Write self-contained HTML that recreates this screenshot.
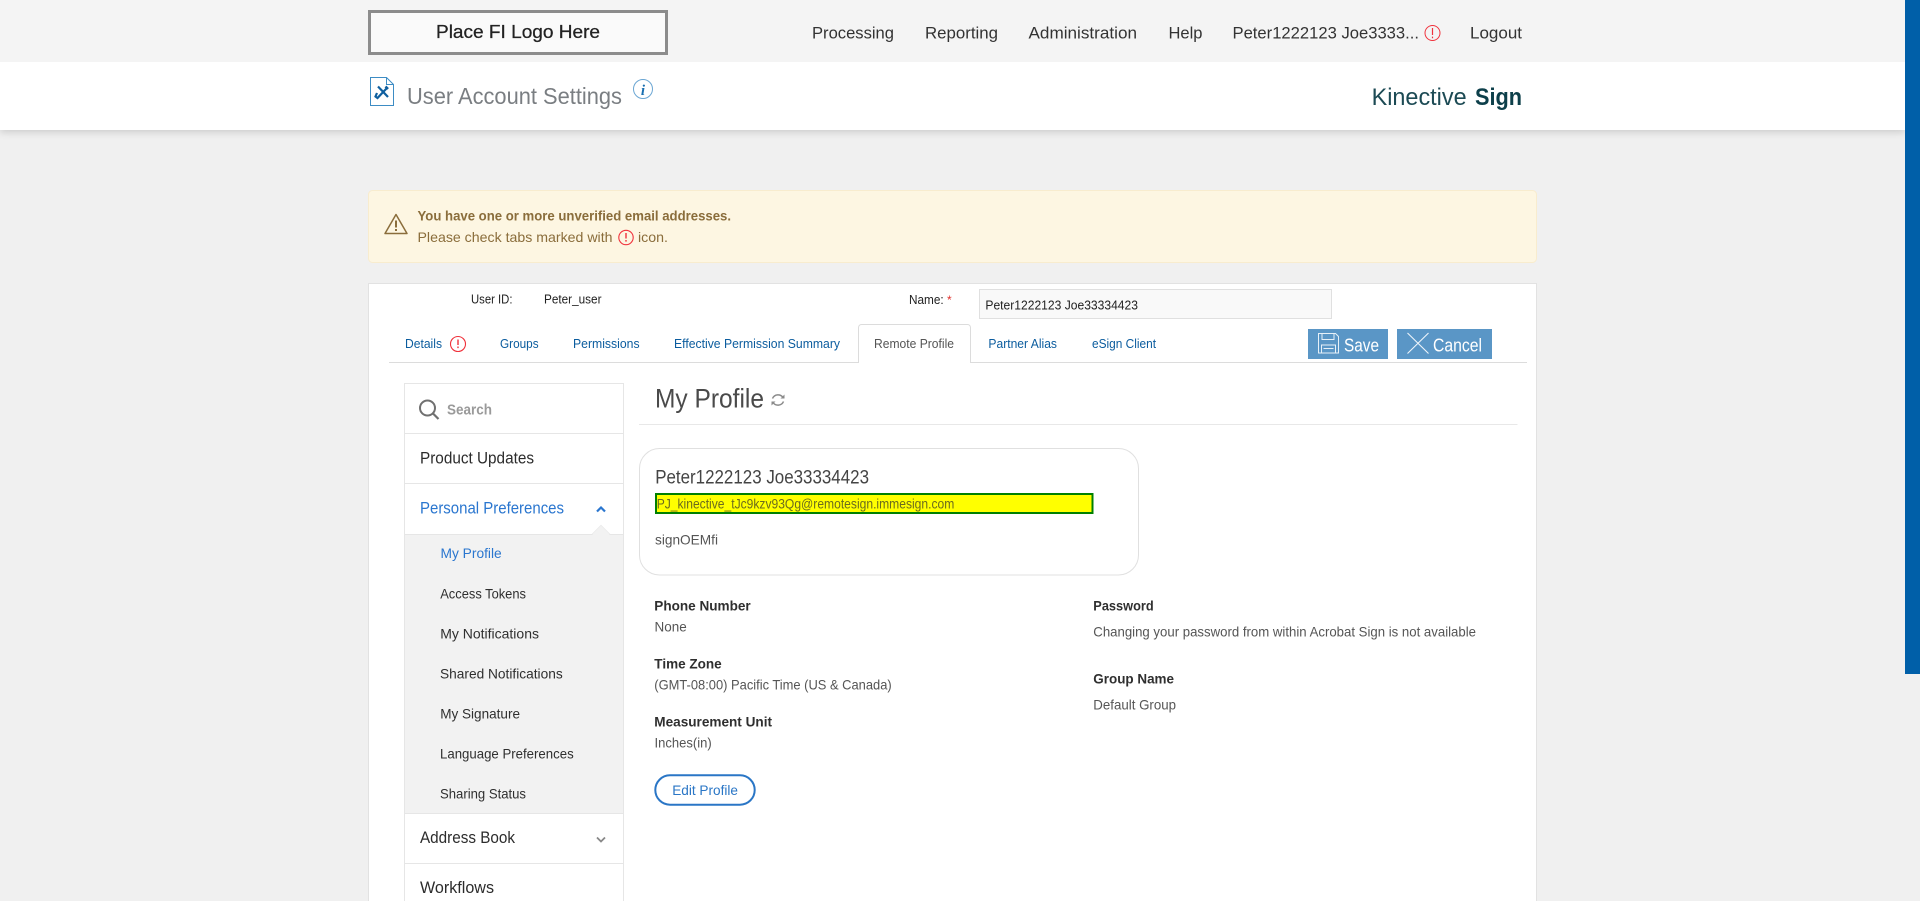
<!DOCTYPE html>
<html lang="en">
<head>
<meta charset="utf-8">
<title>User Account Settings</title>
<style>
html,body{margin:0;padding:0;width:1920px;height:901px;overflow:hidden;background:#f0f0f0}
svg{display:block;position:absolute;left:0;top:0}
text{font-family:"Liberation Sans",sans-serif;white-space:pre}
.nav{font-size:17px;fill:#333}
.tab{font-size:12.5px;fill:#0b5c9e}
.s{font-size:12.5px;fill:#222}
.m{font-size:16.5px;fill:#2c2c2c}
.sub{font-size:14px;fill:#2f2f2f}
.lbl{font-size:14px;font-weight:bold;fill:#2f2f2f}
.val{font-size:14px;fill:#555}
.warn{font-size:14px;fill:#8a6d3b}
.blue{fill:#2a76cf}
</style>
</head>
<body>
<svg xmlns="http://www.w3.org/2000/svg" width="1920" height="901" viewBox="0 0 1920 901">
<rect width="1920" height="901" fill="#f0f0f0"/>

<!-- header -->
<rect x="0" y="62" width="1905" height="68" fill="#fff" style="filter:drop-shadow(0 2px 4px rgba(0,0,0,.16))"/>
<rect x="0" y="0" width="1905" height="62" fill="#f4f4f4"/>
<rect x="1905" y="0" width="15" height="674" fill="#005fa8"/>

<!-- logo -->
<rect x="369.5" y="11.5" width="297" height="42" fill="#fafafa" stroke="#8c8c8c" stroke-width="3"/>
<text x="436" y="38" font-size="18" fill="#222" stroke="#222" stroke-width=".25" textLength="164" lengthAdjust="spacingAndGlyphs">Place FI Logo Here</text>

<!-- nav -->
<text class="nav" x="812" y="38.5" textLength="82" lengthAdjust="spacingAndGlyphs">Processing</text>
<text class="nav" x="925" y="38.5" textLength="73" lengthAdjust="spacingAndGlyphs">Reporting</text>
<text class="nav" x="1028.5" y="38.5" textLength="108.500" lengthAdjust="spacingAndGlyphs">Administration</text>
<text class="nav" x="1168.5" y="38.5" textLength="34" lengthAdjust="spacingAndGlyphs">Help</text>
<text class="nav" x="1232.5" y="38.5" textLength="186.5" lengthAdjust="spacingAndGlyphs">Peter1222123 Joe3333...</text>
<circle cx="1432.5" cy="33" r="7.5" fill="none" stroke="#f0323c" stroke-width="1"/>
<path d="M1432.5 28v7M1432.5 36.600v1.600" stroke="#f0323c" stroke-width="1.200" fill="none"/>
<text class="nav" x="1470" y="38.5" textLength="52" lengthAdjust="spacingAndGlyphs">Logout</text>

<!-- title bar -->
<path d="M370.500 77.500h16l7 7v21h-23z" fill="#fff" stroke="#3d8cc4" stroke-width="1"/>
<path d="M386.500 77.500v7h7" fill="none" stroke="#3d8cc4" stroke-width="1"/>
<path d="M377 93l-1.500 3.500 2 1.500 9-9.500M378 86.500l10 10.500" stroke="#0f5f9f" stroke-width="2.200" fill="none"/>
<path d="M385.500 86.500l2.500 2.500" stroke="#0f5f9f" stroke-width="2.600" fill="none"/>
<text x="407" y="104" font-size="23" fill="#7a7e82" textLength="215" lengthAdjust="spacingAndGlyphs">User Account Settings</text>
<circle cx="643" cy="89" r="9.500" fill="#fff" stroke="#6ba6d3" stroke-width="1"/>
<text x="643" y="95" font-size="15" font-weight="bold" font-style="italic" text-anchor="middle" fill="#1a6fb0" style="font-family:'Liberation Serif',serif">i</text>
<text x="1371.600" y="105" font-size="24" fill="#1c4a54" textLength="95" lengthAdjust="spacingAndGlyphs">Kinective</text>
<text x="1475" y="105" font-size="24" font-weight="bold" fill="#0d3f4a" textLength="47" lengthAdjust="spacingAndGlyphs">Sign</text>

<!-- alert -->
<rect x="368.500" y="190.500" width="1168" height="72" rx="4" fill="#fdf6e2" stroke="#f8ecce" stroke-width="1"/>
<path d="M396 214.500l11 19h-22z" fill="none" stroke="#8a6d3b" stroke-width="1.500" stroke-linejoin="round"/>
<path d="M396 220.500v7M396 229v2" stroke="#8a6d3b" stroke-width="2" fill="none"/>
<text class="warn" x="417.500" y="220.700" font-weight="bold" textLength="313.500" lengthAdjust="spacingAndGlyphs">You have one or more unverified email addresses.</text>
<text class="warn" x="417.500" y="242" textLength="195" lengthAdjust="spacingAndGlyphs">Please check tabs marked with</text>
<circle cx="626" cy="237.500" r="7.200" fill="none" stroke="#f0323c" stroke-width="1.100"/>
<path d="M626 233v5.500M626 240v1.600" stroke="#f0323c" stroke-width="1.400" fill="none"/>
<text class="warn" x="638" y="242" textLength="30" lengthAdjust="spacingAndGlyphs">icon.</text>

<!-- main card -->
<rect x="368.500" y="283.500" width="1168" height="640" fill="#fff" stroke="#e2e2e2" stroke-width="1"/>
<text class="s" x="471" y="303.700" textLength="41.500" lengthAdjust="spacingAndGlyphs">User ID:</text>
<text class="s" x="544" y="303.700" textLength="57.500" lengthAdjust="spacingAndGlyphs">Peter_user</text>
<text class="s" x="909" y="304" textLength="34.700" lengthAdjust="spacingAndGlyphs">Name:</text>
<text x="947" y="304" font-size="12" fill="#e0302c">*</text>
<rect x="979.500" y="289.500" width="352" height="29" fill="#f9f9f9" stroke="#e0e0e0" stroke-width="1"/>
<text class="s" x="985.400" y="309.300" textLength="152.600" lengthAdjust="spacingAndGlyphs">Peter1222123 Joe33334423</text>

<!-- tabs -->
<path d="M389 362.500h469.500M970.500 362.500H1527" stroke="#dcdcdc" stroke-width="1" fill="none"/>
<path d="M858.500 363v-35.500a3 3 0 0 1 3-3h106a3 3 0 0 1 3 3v35.500" fill="#fff" stroke="#dcdcdc" stroke-width="1"/>
<text class="tab" x="405" y="348" textLength="37" lengthAdjust="spacingAndGlyphs">Details</text>
<circle cx="458" cy="344" r="7.500" fill="none" stroke="#f0323c" stroke-width="1.100"/>
<path d="M458 339.500v5.500M458 346.500v1.600" stroke="#f0323c" stroke-width="1.400" fill="none"/>
<text class="tab" x="500" y="348" textLength="38.600" lengthAdjust="spacingAndGlyphs">Groups</text>
<text class="tab" x="573" y="348" textLength="66.600" lengthAdjust="spacingAndGlyphs">Permissions</text>
<text class="tab" x="674" y="348" textLength="166" lengthAdjust="spacingAndGlyphs">Effective Permission Summary</text>
<text class="tab" x="874" y="348" textLength="80" lengthAdjust="spacingAndGlyphs" style="fill:#555">Remote Profile</text>
<text class="tab" x="988.400" y="348" textLength="68.600" lengthAdjust="spacingAndGlyphs">Partner Alias</text>
<text class="tab" x="1092" y="348" textLength="64" lengthAdjust="spacingAndGlyphs">eSign Client</text>

<!-- buttons -->
<rect x="1308" y="329" width="80" height="30" fill="#5a96c6"/>
<path d="M1318.500 333.500h17l3 3v16.500h-20z" fill="none" stroke="#e6f0f8" stroke-width="1"/>
<path d="M1322 333.500v6h12v-6M1321.500 353v-8h14v8M1323.500 348.500h10" fill="none" stroke="#e6f0f8" stroke-width="1"/>
<text x="1344" y="351.500" font-size="18" fill="#fff" textLength="35" lengthAdjust="spacingAndGlyphs">Save</text>
<rect x="1397" y="329" width="95" height="30" fill="#5a96c6"/>
<path d="M1407.500 333l21 20.500M1428.500 333l-21 20.500" fill="none" stroke="#eef5fb" stroke-width="1.100"/>
<text x="1433" y="351.500" font-size="18" fill="#fff" textLength="49" lengthAdjust="spacingAndGlyphs">Cancel</text>

<!-- sidebar -->
<rect x="404.500" y="383.500" width="219" height="540" fill="#fff" stroke="#e6e6e6" stroke-width="1"/>
<rect x="405" y="534" width="218" height="279" fill="#f2f2f2"/>
<path d="M405 433.500h218M405 483.500h218M405 534.500h187l9-9 9 9h13M405 813.500h218M405 863.500h218" fill="none" stroke="#e6e6e6" stroke-width="1"/>
<path d="M592.500 534l8.500-8.500 8.500 8.500z" fill="#f2f2f2"/>
<circle cx="427.500" cy="408" r="7.500" fill="none" stroke="#707070" stroke-width="2"/>
<path d="M433 413.500l5.500 5.500" stroke="#707070" stroke-width="2.200" fill="none"/>
<text x="447" y="414.500" font-size="14.500" font-weight="bold" fill="#9a9a9a" textLength="45" lengthAdjust="spacingAndGlyphs">Search</text>
<text class="m" x="420" y="463.300" textLength="114" lengthAdjust="spacingAndGlyphs">Product Updates</text>
<text class="m blue" x="420" y="513.300" textLength="144" lengthAdjust="spacingAndGlyphs">Personal Preferences</text>
<path d="M597 511.500l4-4 4 4" fill="none" stroke="#2a76cf" stroke-width="2.200"/>
<text class="sub blue" x="440.500" y="558" textLength="61.200" lengthAdjust="spacingAndGlyphs">My Profile</text>
<text class="sub" x="440.200" y="598.300" textLength="85.800" lengthAdjust="spacingAndGlyphs">Access Tokens</text>
<text class="sub" x="440.200" y="638.300" textLength="98.800" lengthAdjust="spacingAndGlyphs">My Notifications</text>
<text class="sub" x="440" y="678.500" textLength="122.700" lengthAdjust="spacingAndGlyphs">Shared Notifications</text>
<text class="sub" x="440.200" y="718.500" textLength="79.800" lengthAdjust="spacingAndGlyphs">My Signature</text>
<text class="sub" x="440" y="758.500" textLength="133.700" lengthAdjust="spacingAndGlyphs">Language Preferences</text>
<text class="sub" x="440" y="798.500" textLength="86" lengthAdjust="spacingAndGlyphs">Sharing Status</text>
<text class="m" x="420" y="843" textLength="95" lengthAdjust="spacingAndGlyphs">Address Book</text>
<path d="M597 837.500l4 4 4-4" fill="none" stroke="#888" stroke-width="1.800"/>
<text class="m" x="420" y="893" textLength="74" lengthAdjust="spacingAndGlyphs">Workflows</text>

<!-- my profile -->
<text x="655" y="407.700" font-size="27" fill="#4a4a4a" textLength="109" lengthAdjust="spacingAndGlyphs">My Profile</text>
<path d="M772.500 398.500a6 6 0 0 1 10.500-1M783.500 401.500a6 6 0 0 1-10.500 1" fill="none" stroke="#8a8a8a" stroke-width="1.500"/>
<path d="M784.500 394.500v4h-4zM771.500 405.500v-4h4z" fill="#8a8a8a"/>
<path d="M639 424.500h878.500" stroke="#e8e8e8" stroke-width="1" fill="none"/>

<rect x="639.500" y="448.500" width="499" height="126.500" rx="20" fill="#fff" stroke="#e0e0e0" stroke-width="1"/>
<text x="655.200" y="483.300" font-size="19.500" fill="#444" textLength="213.800" lengthAdjust="spacingAndGlyphs">Peter1222123 Joe33334423</text>
<rect x="656" y="494" width="436.500" height="19" fill="#ffff00" stroke="#008000" stroke-width="2"/>
<text x="656.700" y="508.500" font-size="14" fill="#6b6b1e" textLength="297.600" lengthAdjust="spacingAndGlyphs">PJ_kinective_tJc9kzv93Qg@remotesign.immesign.com</text>
<text class="val" x="655" y="544.500" textLength="63" lengthAdjust="spacingAndGlyphs">signOEMfi</text>

<text class="lbl" x="654.300" y="610.700" textLength="96.400" lengthAdjust="spacingAndGlyphs">Phone Number</text>
<text class="val" x="654.500" y="631.500" textLength="32.200" lengthAdjust="spacingAndGlyphs">None</text>
<text class="lbl" x="654.300" y="668.700" textLength="67.400" lengthAdjust="spacingAndGlyphs">Time Zone</text>
<text class="val" x="654.300" y="689.500" textLength="237.400" lengthAdjust="spacingAndGlyphs">(GMT-08:00) Pacific Time (US &amp; Canada)</text>
<text class="lbl" x="654.300" y="726.700" textLength="117.700" lengthAdjust="spacingAndGlyphs">Measurement Unit</text>
<text class="val" x="654.500" y="747.500" textLength="57.200" lengthAdjust="spacingAndGlyphs">Inches(in)</text>
<rect x="655.300" y="775.300" width="99.400" height="29.400" rx="14.700" fill="#fff" stroke="#2a76c6" stroke-width="2"/>
<text x="672.200" y="795" font-size="14" fill="#2a76c6" textLength="65.800" lengthAdjust="spacingAndGlyphs">Edit Profile</text>

<text class="lbl" x="1093.300" y="610.700" textLength="60.400" lengthAdjust="spacingAndGlyphs">Password</text>
<text class="val" x="1093.300" y="636.700" textLength="382.700" lengthAdjust="spacingAndGlyphs">Changing your password from within Acrobat Sign is not available</text>
<text class="lbl" x="1093.300" y="683.500" textLength="80.700" lengthAdjust="spacingAndGlyphs">Group Name</text>
<text class="val" x="1093.300" y="709.500" textLength="82.700" lengthAdjust="spacingAndGlyphs">Default Group</text>
</svg>
</body>
</html>
